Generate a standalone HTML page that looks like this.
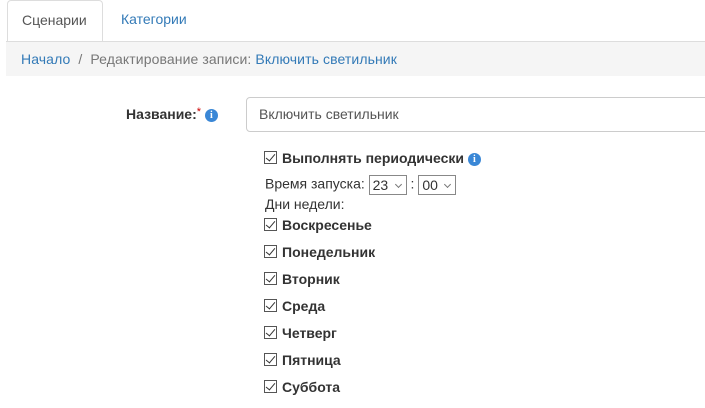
<!DOCTYPE html>
<html><head><meta charset="utf-8"><style>
*{box-sizing:border-box}
body{margin:0;width:705px;height:408px;overflow:hidden;background:#fff;font-family:"Liberation Sans",Arial,sans-serif;font-size:14px;color:#333;position:relative}
.a{position:absolute;white-space:nowrap}
.tab{left:7px;top:0;width:96px;height:41px;border:1px solid #ddd;border-bottom:none;border-radius:4px 4px 0 0;background:#fff;padding:11px 0 0 14px;color:#555}
.bc{left:6px;top:41px;width:700px;height:35px;background:#f5f5f5;border-top:1px solid #ddd;padding:9px 0 0 15px;color:#777;letter-spacing:0.1px}
a{color:#337ab7;text-decoration:none}
.inp{left:246px;top:97px;width:470px;height:35px;border:1px solid #ccc;border-radius:4px;padding:8px 12px;color:#555}
.info{display:inline-block;width:13px;height:13px;border-radius:50%;background:#3a87d6;color:#fff;font:bold 10px/13px "Liberation Serif",serif;text-align:center;vertical-align:1px}
.cb{display:inline-block;width:13px;height:13px;border:1px solid #555;vertical-align:-1px;margin-right:5px;position:relative;background:#fff}
.cb:after{content:"";position:absolute;left:3px;top:0px;width:4px;height:8px;border:solid #333;border-width:0 1.5px 1.5px 0;transform:rotate(40deg)}
b{color:#333}
.sel{display:inline-block;border:1px solid #888;height:20px;width:38px;padding:0 3px;line-height:18px;vertical-align:middle;font-size:14px;position:relative}
.sel:after{content:"";position:absolute;right:5px;top:6px;width:4px;height:4px;border:solid #777;border-width:0 1px 1px 0;transform:rotate(45deg)}
</style></head><body>
<div class="a tab">Сценарии</div>
<div class="a" style="left:121px;top:11px"><a>Категории</a></div>
<div class="a bc"><a>Начало</a>&nbsp; / &nbsp;Редактирование записи: <a>Включить светильник</a></div>
<div class="a" style="left:126px;top:106px"><b>Название:</b><span style="color:#c00;font-size:11px;vertical-align:4px">*</span> <span class="info">i</span></div>
<div class="a inp">Включить светильник</div>
<div class="a" style="left:264px;top:150px"><span class="cb"></span><b>Выполнять периодически</b> <span class="info">i</span></div>
<div class="a" style="left:265px;top:175px">Время запуска: <span class="sel">23</span> : <span class="sel">00</span></div>
<div class="a" style="left:265px;top:196px">Дни недели:</div>
<div class="a" style="left:264px;top:217px"><span class="cb"></span><b>Воскресенье</b></div>
<div class="a" style="left:264px;top:244px"><span class="cb"></span><b>Понедельник</b></div>
<div class="a" style="left:264px;top:271px"><span class="cb"></span><b>Вторник</b></div>
<div class="a" style="left:264px;top:298px"><span class="cb"></span><b>Среда</b></div>
<div class="a" style="left:264px;top:325px"><span class="cb"></span><b>Четверг</b></div>
<div class="a" style="left:264px;top:352px"><span class="cb"></span><b>Пятница</b></div>
<div class="a" style="left:264px;top:379px"><span class="cb"></span><b>Суббота</b></div>
</body></html>
